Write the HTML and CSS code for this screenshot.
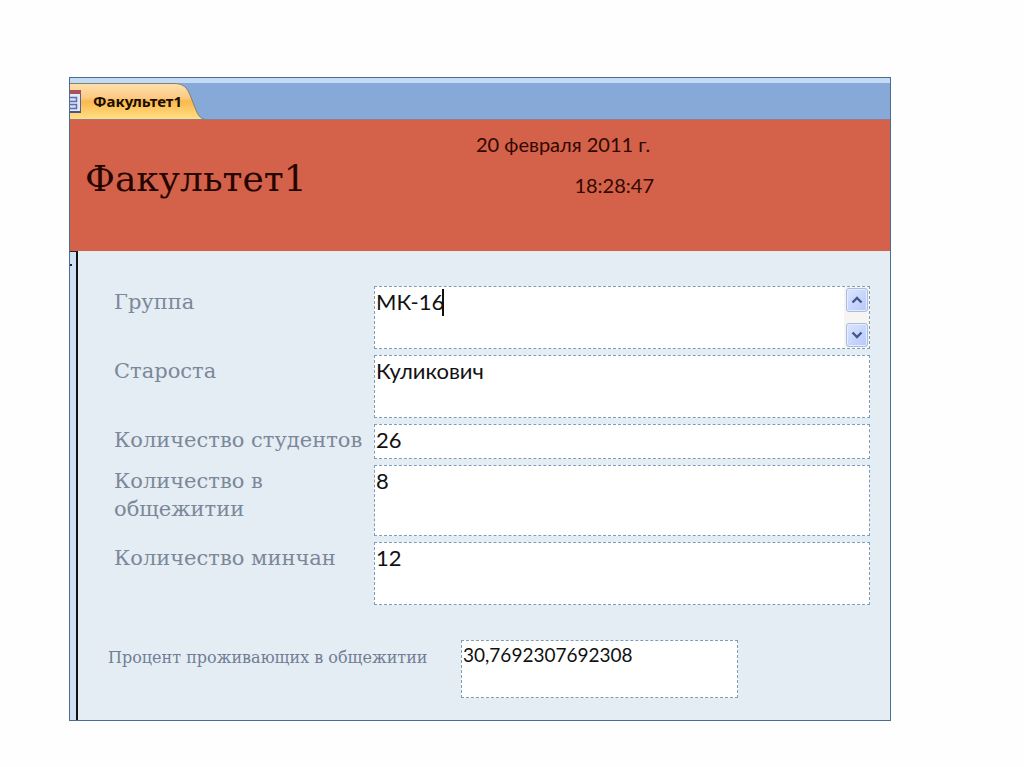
FILE: index.html
```html
<!DOCTYPE html>
<html lang="ru">
<head>
<meta charset="utf-8">
<meta name="viewport" content="width=device-width, initial-scale=1">
<title>Факультет1</title>
<link rel="stylesheet" href="styles.css">
</head>
<body class="page">
<main class="window">
  <nav class="tabs">
    <button class="tab" type="button">
      <svg class="tab-shape" viewBox="0 0 134 36" preserveAspectRatio="none" aria-hidden="true">
        <defs>
          <linearGradient id="gold" x1="0" y1="0" x2="0" y2="1">
            <stop offset="0" stop-color="#fde0ae"/>
            <stop offset="0.4" stop-color="#fdca83"/>
            <stop offset="0.5" stop-color="#fbb851"/>
            <stop offset="1" stop-color="#ffdf82"/>
          </linearGradient>
        </defs>
        <path d="M0 0.5H104C114 0.5 117 5 120 12L126 27C128 32 130 35 134 36H0Z" fill="url(#gold)"/>
        <path d="M0 0.5H104C114 0.5 117 5 120 12L126 27C128 32 130 35 134 36" fill="none" stroke="#7f806f"/>
      </svg>
      <svg class="tab-icon" viewBox="0 0 11 23" aria-hidden="true">
        <path d="M0 0.5H10.5V22H0" fill="#e3e8f7" stroke="#56609a"/>
        <path d="M0 0H11V4H0Z" fill="#a8515e"/>
        <path d="M0 7.5H6.5V11.5H0M0 14.5H6.5V18.5H0" fill="#d5def5" stroke="#5a6eae" stroke-width="1.5"/>
        <path d="M0 22H11" stroke="#48548a" stroke-width="2"/>
      </svg>
      <span class="tab-text">Факультет1</span>
    </button>
  </nav>
  <header class="banner">
    <h1 class="title">Факультет1</h1>
    <div class="stamp">
      <time class="date">20 февраля 2011 г.</time>
      <time class="clock">18:28:47</time>
    </div>
  </header>
  <div class="body">
    <div class="selector" aria-hidden="true"><span class="mark"></span></div>
    <form class="form">
      <div class="fields">
        <label class="label" for="group">Группа</label>
        <div class="box scroller">
          <textarea class="field" id="group">МК-16</textarea>
          <span class="caret"></span>
          <div class="scrollbar">
            <button class="arrow" type="button" aria-label="Вверх"><svg class="chevron" viewBox="0 0 12 10"><path d="M1.5 7.5L6 3L10.5 7.5" fill="none" stroke="#43578f" stroke-width="2.4"/></svg></button>
            <button class="arrow" type="button" aria-label="Вниз"><svg class="chevron" viewBox="0 0 12 10"><path d="M1.5 2.5L6 7L10.5 2.5" fill="none" stroke="#43578f" stroke-width="2.4"/></svg></button>
          </div>
        </div>
        <label class="label" for="head">Староста</label>
        <div class="box"><textarea class="field" id="head">Куликович</textarea></div>
        <label class="label" for="students">Количество студентов</label>
        <div class="box low"><input class="field line" id="students" type="text" value="26"></div>
        <label class="label" for="dorm">Количество в общежитии</label>
        <div class="box high"><textarea class="field" id="dorm">8</textarea></div>
        <label class="label" for="minsk">Количество минчан</label>
        <div class="box"><textarea class="field" id="minsk">12</textarea></div>
      </div>
      <div class="summary">
        <label class="label small" for="percent">Процент проживающих в общежитии</label>
        <div class="box short"><textarea class="field number" id="percent">30,7692307692308</textarea></div>
      </div>
    </form>
  </div>
</main>
</body>
</html>
```
FILE: styles.css
```css
* { box-sizing: border-box; }

.page {
  margin: 0;
  padding: 77px 133px 46px 69px;
  background: #fefefe;
  font-family: Lato, "Noto Sans", sans-serif;
  color: #111;
}

.window {
  border: 1px solid #4d6c8f;
  background: #e4edf3;
}

.tabs {
  display: flex;
  height: 42px;
  padding-top: 5px;
  border-bottom: 1px solid #9b7889;
  background: linear-gradient(#c3dbf5 5px, #87a9d7 5px);
}

.tab {
  position: relative;
  display: flex;
  align-items: center;
  gap: 12px;
  width: 134px;
  padding: 0;
  border: 0;
  background: none;
  color: #1b0d00;
  font: bold 15px/20px "Noto Sans", sans-serif;
}

.tab-shape {
  position: absolute;
  inset: 0;
  width: 100%;
  height: 100%;
}

.tab-icon {
  position: relative;
  width: 11px;
  height: 23px;
}

.tab-text { position: relative; }

.banner {
  display: flex;
  height: 131px;
  padding: 0 15px;
  background: #d4614a;
}

.title {
  flex: 0 0 391px;
  margin: 0;
  padding-top: 35px;
  font: 36px/48px "DejaVu Serif", serif;
  color: #250500;
}

.stamp {
  display: flex;
  flex-direction: column;
  gap: 17px;
  width: 178px;
  padding-top: 12px;
  font-size: 20px;
  line-height: 24px;
  color: #300800;
}

.clock { text-align: right; }

.body { display: flex; }

.selector {
  flex: 0 0 8px;
  padding-top: 12px;
  border-top: 1px solid #222;
  border-right: 2px solid #111;
  background: #cfe0f5;
}

.mark {
  display: block;
  width: 2px;
  height: 2px;
  background: #222;
}

.form {
  flex: 1;
  padding: 35px 20px 22px 30px;
}

.fields {
  display: grid;
  grid-template-columns: 252px 1fr;
  gap: 6px 8px;
  padding-left: 6px;
}

.label {
  font: 21px/28px "DejaVu Serif", serif;
  color: #7c879a;
  padding-top: 2px;
}

.box {
  position: relative;
  height: 63px;
  border: 1px dashed #7d9dbb;
  background: #fff;
}

.low { height: 35px; }
.high { height: 71px; }
.short { width: 277px; height: 58px; }

.field {
  display: block;
  width: 100%;
  height: 100%;
  padding: 0 1px;
  border: 0;
  outline: 0;
  resize: none;
  overflow: hidden;
  background: transparent;
  color: #111;
  font: 22px/30px Lato, "Noto Sans", sans-serif;
}

.line { height: 30px; }

.number { font-size: 19px; line-height: 28px; }

.scroller { display: flex; }

.caret {
  position: absolute;
  left: 67px;
  top: 2px;
  width: 2px;
  height: 27px;
  background: #111;
}

.scrollbar {
  display: flex;
  flex: 0 0 25px;
  flex-direction: column;
  justify-content: space-between;
  align-items: center;
  padding: 1px 0;
  background: #f6f5f2;
}

.arrow {
  display: flex;
  align-items: center;
  justify-content: center;
  width: 22px;
  height: 24px;
  padding: 0;
  border: 1px solid #a9bbe0;
  border-radius: 3px;
  background: linear-gradient(135deg, #dbe5ff, #b5c8f8);
  box-shadow: inset 0 0 0 1px #e6edff;
}

.chevron { width: 12px; height: 10px; }

.summary {
  display: grid;
  grid-template-columns: 345px 1fr;
  gap: 8px;
  margin-top: 35px;
}

.small {
  padding-top: 4px;
  font-size: 16px;
  color: #727d96;
}
```
